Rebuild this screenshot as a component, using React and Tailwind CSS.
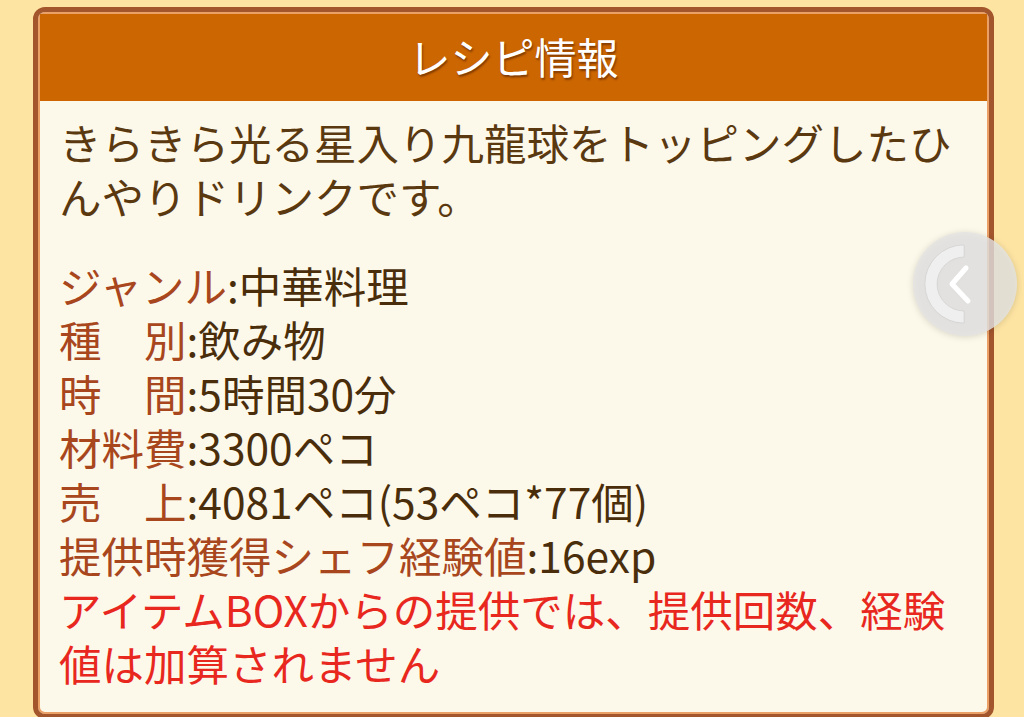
import React from 'react';

const font = { fontFamily: '"Noto Sans CJK JP", "Noto Sans", sans-serif' };

const rows = [
  { label: 'ジャンル', value: '中華料理' },
  { label: '種　別', value: '飲み物' },
  { label: '時　間', value: '5時間30分' },
  { label: '材料費', value: '3300ペコ' },
  { label: '売　上', value: '4081ペコ(53ペコ*77個)' },
  { label: '提供時獲得シェフ経験値', value: '16exp' },
];

function SlideButton() {
  return (
    <svg width="108" height="108" viewBox="0 0 108 108" className="drop-shadow-[0_1px_3px_rgba(0,0,0,0.18)]">
      <circle cx="54" cy="54" r="52" fill="rgba(228,228,228,0.8)" />
      {/* C shaped ring */}
      <path
        d="M53 15 A39 39 0 0 0 53 93 L53 81 A27 27 0 0 1 53 27 Z"
        fill="rgba(240,240,240,0.95)"
        stroke="rgba(0,0,0,0.07)"
      />
      <path d="M55 38 L41 54 L57 71" fill="none" stroke="#ffffff" strokeWidth="5" strokeLinecap="round" strokeLinejoin="round" />
    </svg>
  );
}

export default function App() {
  return (
    <div className="relative h-[717px] w-[1024px] overflow-hidden bg-[#fde4a3]" style={font}>
      <div className="ml-[33px] mt-[7px] h-[712px] w-[961px] rounded-[12px] border-[5px] border-[#a3552b] bg-[#fdf9ea] shadow-[inset_0_0_0_2px_#eba066] overflow-hidden">
        <div className="mx-[2px] mt-[2px] flex h-[87px] items-center justify-center bg-[#cc6600]">
          <h1 className="mb-[4px] text-[42px] leading-none text-white [text-shadow:1px_2px_2px_rgba(80,30,0,0.6)]">
            レシピ情報
          </h1>
        </div>

        <div className="px-[21px] pt-[14px] text-[42.5px] leading-[54px]">
          <p className="text-[#5a3810]">
            きらきら光る星入り九龍球をトッピングしたひんやりドリンクです。
          </p>

          <div className="mt-[35px]">
            {rows.map((r) => (
              <div key={r.label} className="whitespace-nowrap">
                <span className="text-[#a8461d]">{r.label}</span>
                <span className="text-[#4a2e0c]">:{r.value}</span>
              </div>
            ))}
            <p className="text-[#e8281e]">
              アイテムBOXからの提供では、提供回数、経験値は加算されません
            </p>
          </div>
        </div>
      </div>

      <div className="absolute left-[911px] top-[230px]">
        <SlideButton />
      </div>
    </div>
  );
}
